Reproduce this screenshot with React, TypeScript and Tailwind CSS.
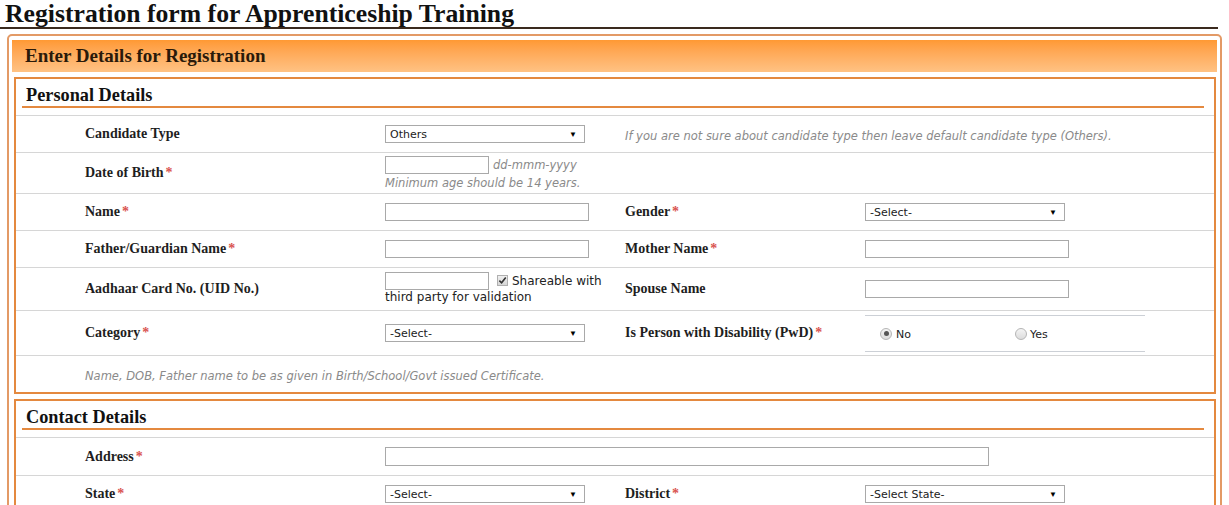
import type { ReactNode } from 'react';

const serif = "font-['Liberation_Serif',serif]";
const sans = "font-['DejaVu_Sans',sans-serif]";

function Req() {
  return <span className="text-[#d9534f] ml-[2px]">*</span>;
}

function Label({ children, req }: { children: ReactNode; req?: boolean }) {
  return (
    <div className={`${serif} font-bold text-[14px] text-[#1e1e1e] leading-none`}>
      {children}
      {req && <Req />}
    </div>
  );
}

function TextBox({ w = 'w-[204px]', h = 'h-[18px]' }: { w?: string; h?: string }) {
  return <input type="text" className={`${w} ${h} border border-[#a9a9a9] bg-white outline-none`} />;
}

// dropdown drawn as a box, the native select renders its text off-centre here
function Select({ value, w = 'w-[200px]' }: { value: string; w?: string }) {
  return (
    <div className={`${w} h-[18px] border border-[#a9a9a9] bg-white flex items-center justify-between pl-[4px] pr-[7px]`}>
      <span className={`${sans} text-[11px] leading-none text-[#222]`}>{value}</span>
      <span className="text-[8px] leading-none text-black">▼</span>
    </div>
  );
}

function Hint({ children, className = '' }: { children: ReactNode; className?: string }) {
  return <span className={`${sans} italic text-[11.5px] leading-none text-[#8a8a8a] ${className}`}>{children}</span>;
}

function Row({ h, children }: { h: string; children: ReactNode }) {
  return (
    <div className={`grid grid-cols-[69px_300px_240px_240px_1fr] items-center border-t border-[#d6d6d6] ${h}`}>
      <div />
      {children}
    </div>
  );
}

function Radio({ checked }: { checked?: boolean }) {
  return (
    <span className="w-[12px] h-[12px] rounded-full border border-[#b5b5b5] bg-gradient-to-b from-[#f4f4f4] to-[#dcdcdc] flex items-center justify-center">
      {checked && <span className="w-[5px] h-[5px] rounded-full bg-[#555]" />}
    </span>
  );
}

function SectionTitle({ children }: { children: ReactNode }) {
  return (
    <div className="px-[6px] pr-[10px] pt-[6px]">
      <h2 className={`${serif} font-bold text-[18.3px] leading-[21px] text-[#111] pl-[4px] border-b-2 border-[#e4893f]`}>{children}</h2>
    </div>
  );
}

export default function App() {
  return (
    <div className="w-[1229px] h-[505px] overflow-hidden bg-white">
      <h1 className={`${serif} font-bold text-[25.7px] leading-[26px] pt-[1px] pl-[5px] w-[1218px] text-[#111] border-b-2 border-[#3a2a1e]`}>
        Registration form for Apprenticeship Training
      </h1>

      <div className="ml-[7px] mt-[5px] w-[1215px] border-2 border-[#e39a66] rounded-[5px] pt-[4px] px-[3px]">
        <div className="h-[32px] bg-gradient-to-b from-[#ff9933] to-[#ffc283] flex items-center pl-[13px]">
          <span className={`${serif} font-bold text-[19px] text-[#2a1a0a]`}>Enter Details for Registration</span>
        </div>

        {/* Personal Details */}
        <div className="mt-[5px] ml-[2px] mr-[1px] border-2 border-[#e4893f]">
          <SectionTitle>Personal Details</SectionTitle>
          <div className="mt-[7px]">
            <Row h="h-[37px]">
              <Label>Candidate Type</Label>
              <Select value="Others" />
              <div className="col-span-2 whitespace-nowrap">
                <Hint>If you are not sure about candidate type then leave default candidate type (Others).</Hint>
              </div>
            </Row>
            <Row h="h-[41px]">
              <Label req>Date of Birth</Label>
              <div className="flex flex-col gap-[4px]">
                <div className="flex items-center gap-[4px]">
                  <TextBox w="w-[104px]" />
                  <Hint>dd-mmm-yyyy</Hint>
                </div>
                <Hint>Minimum age should be 14 years.</Hint>
              </div>
              <div />
              <div />
            </Row>
            <Row h="h-[37px]">
              <Label req>Name</Label>
              <TextBox />
              <Label req>Gender</Label>
              <Select value="-Select-" />
            </Row>
            <Row h="h-[37px]">
              <Label req>Father/Guardian Name</Label>
              <TextBox />
              <Label req>Mother Name</Label>
              <TextBox />
            </Row>
            <Row h="h-[43px]">
              <Label>Aadhaar Card No. (UID No.)</Label>
              <div className={`${sans} text-[12px] text-[#222] leading-[17px]`}>
                <div className="flex items-start gap-[4px]">
                  <TextBox w="w-[104px]" />
                  <span className="mt-[3px] ml-[4px] w-[11px] h-[11px] border border-[#b0b0b0] bg-gradient-to-b from-[#f0f0f0] to-[#d6d6d6] flex items-center justify-center">
                    <svg viewBox="0 0 10 10" className="w-[9px] h-[9px]">
                      <path d="M1.5 5.2 L4 7.6 L8.6 1.8" fill="none" stroke="#333" strokeWidth="1.8" />
                    </svg>
                  </span>
                  <span className="mt-[1px]">Shareable with</span>
                </div>
                <div className="-mt-[1px]">third party for validation</div>
              </div>
              <Label>Spouse Name</Label>
              <TextBox />
            </Row>
            <Row h="h-[45px]">
              <Label req>Category</Label>
              <Select value="-Select-" />
              <Label req>Is Person with Disability (PwD)</Label>
              <div className="w-[280px] h-[37px] border-y border-[#ccd0d6] flex items-center pl-[15px] pt-[1px]">
                <label className={`${sans} flex items-center gap-[4px] text-[11px] text-[#222] w-[135px]`}>
                  <Radio checked />
                  <span className="mt-[3px]">No</span>
                </label>
                <label className={`${sans} flex items-center gap-[3px] text-[11px] text-[#222]`}>
                  <Radio />
                  <span className="mt-[3px]">Yes</span>
                </label>
              </div>
            </Row>
            <Row h="h-[37px]">
              <div className="col-span-4 whitespace-nowrap">
                <Hint>Name, DOB, Father name to be as given in Birth/School/Govt issued Certificate.</Hint>
              </div>
            </Row>
          </div>
        </div>

        {/* Contact Details */}
        <div className="mt-[5px] ml-[2px] mr-[1px] border-2 border-[#e4893f] h-[200px]">
          <SectionTitle>Contact Details</SectionTitle>
          <div className="mt-[7px]">
            <Row h="h-[38px]">
              <Label req>Address</Label>
              <div className="col-span-3">
                <TextBox w="w-[604px]" h="h-[19px]" />
              </div>
            </Row>
            <Row h="h-[37px]">
              <Label req>State</Label>
              <Select value="-Select-" />
              <Label req>District</Label>
              <Select value="-Select State-" />
            </Row>
          </div>
        </div>
      </div>
    </div>
  );
}
